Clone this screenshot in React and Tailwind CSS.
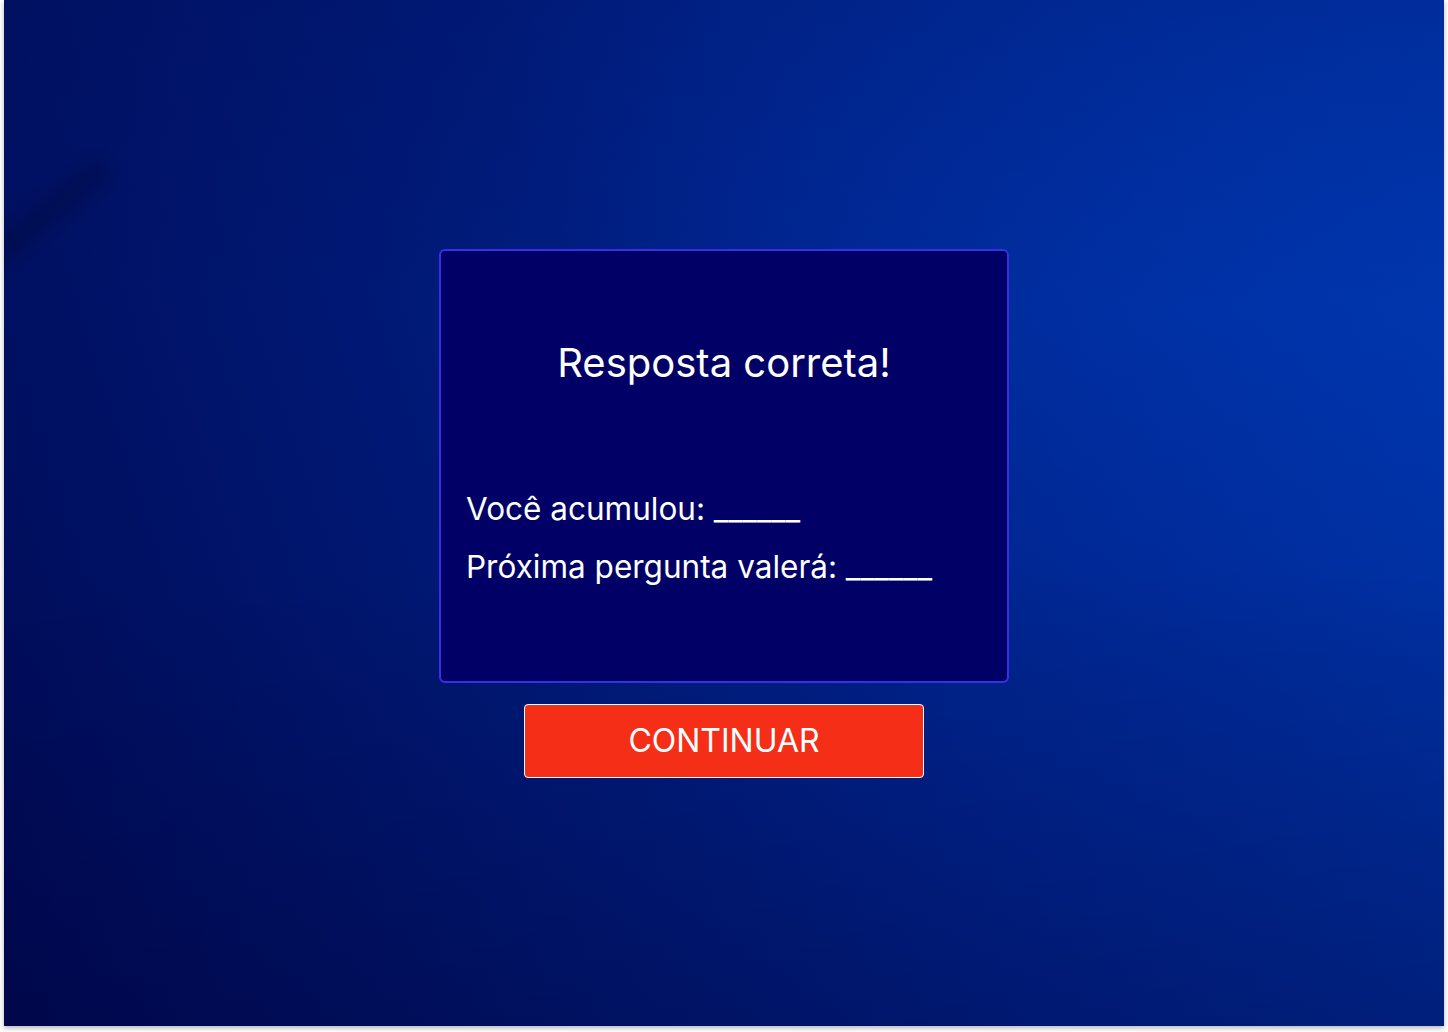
export default function App() {
  return (
    <div className="w-[1448px] h-[1032px] bg-white overflow-hidden" style={{ fontFamily: "Inter, 'Noto Sans', sans-serif" }}>
      <div className="relative ml-[4px] w-[1440px] h-[1026px] overflow-hidden shadow-[0_2px_5px_rgba(0,0,0,0.3)] bg-[linear-gradient(72deg,#000a55_0%,#00166f_28%,#00238c_58%,#0034a8_100%)]">
        <div className="absolute inset-0 bg-[radial-gradient(ellipse_at_95%_3%,rgba(0,60,190,0.6),transparent_45%)]" />
        <div className="absolute inset-0 bg-[linear-gradient(to_bottom,transparent_55%,rgba(0,0,50,0.3)_100%)]" />
        <div className="absolute inset-0 bg-[linear-gradient(to_bottom,rgba(0,10,80,0.25)_0%,transparent_30%)]" />
        <div className="absolute left-[-30px] top-[200px] h-[24px] w-[150px] -rotate-[40deg] rounded-full bg-[rgba(0,5,50,0.35)] blur-[10px]" />
        <div className="relative flex h-full flex-col items-center justify-center">
          <div className="flex h-[434px] w-[570px] flex-col rounded-[6px] border-2 border-[#3b2fe6] bg-[#000066] text-white">
            <div className="pt-[88px] text-center text-[40px] leading-[48px]">Resposta correta!</div>
            <div className="mt-[93px] pl-[25px] text-[31.5px] leading-[58px]">
              <div>Você acumulou: ______</div>
              <div>Próxima pergunta valerá: ______</div>
            </div>
          </div>
          <button className="mt-[21px] flex h-[74px] w-[400px] items-center justify-center rounded-[4px] border border-white bg-[#f52e18] text-[32px] text-white">
            CONTINUAR
          </button>
        </div>
      </div>
    </div>
  );
}
